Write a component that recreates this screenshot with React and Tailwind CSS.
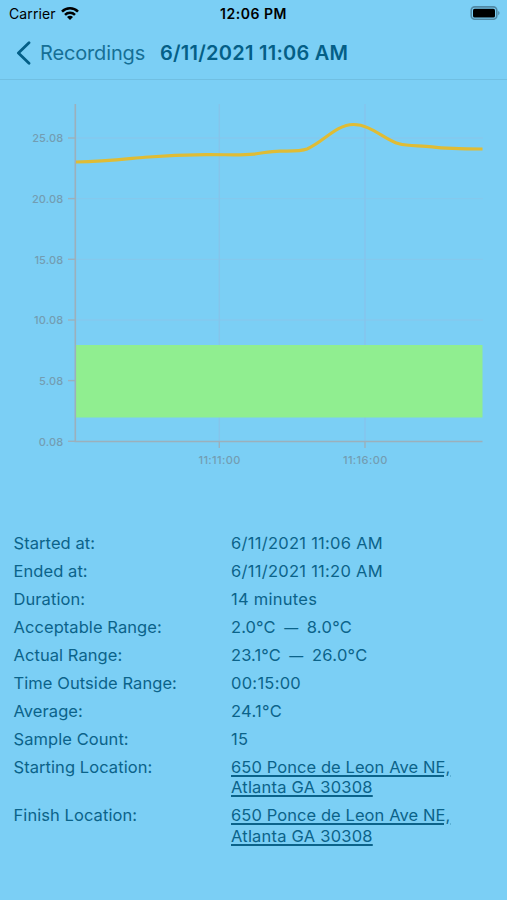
import React from 'react';

const yTicks = [
  { label: '25.08', y: 138 },
  { label: '20.08', y: 198.6 },
  { label: '15.08', y: 259.3 },
  { label: '10.08', y: 320 },
  { label: '5.08', y: 380.6 },
  { label: '0.08', y: 441.3 },
];

const xTicks = [
  { label: '11:11:00', x: 219.3 },
  { label: '11:16:00', x: 365 },
];

const rows = [
  { label: 'Started at:', value: '6/11/2021 11:06 AM' },
  { label: 'Ended at:', value: '6/11/2021 11:20 AM' },
  { label: 'Duration:', value: '14 minutes' },
  { label: 'Acceptable Range:', range: ['2.0°C', '8.0°C'] },
  { label: 'Actual Range:', range: ['23.1°C', '26.0°C'] },
  { label: 'Time Outside Range:', value: '00:15:00' },
  { label: 'Average:', value: '24.1°C' },
  { label: 'Sample Count:', value: '15' },
  { label: 'Starting Location:', address: ['650 Ponce de Leon Ave NE,', 'Atlanta GA 30308'] },
  { label: 'Finish Location:', address: ['650 Ponce de Leon Ave NE,', 'Atlanta GA 30308'] },
];

function StatusBar() {
  return (
    <div className="grid h-[27px] grid-cols-3 items-center px-[7px] text-black">
      <div className="flex items-center gap-[5px] pl-[2px]">
        <span className="text-[14px] tracking-[0.1px]">Carrier</span>
        <svg width="18" height="14" viewBox="0 0 18 14" fill="none" stroke="#000" strokeWidth="2.5">
          <path d="M1 4.7C5.4 0.2 12.6 0.2 17 4.7" />
          <path d="M4 7.8C6.8 5 11.2 5 14 7.8" />
          <path d="M9 12.9L6 9.9C7.7 8.4 10.3 8.4 12 9.9Z" fill="#000" stroke="none" />
        </svg>
      </div>
      <span className="text-center text-[14px] font-semibold tracking-[0.5px] whitespace-nowrap">12:06 PM</span>
      <svg className="justify-self-end" width="30" height="15" viewBox="0 0 30 15">
        <rect x="1.2" y="0.9" width="25.6" height="12.4" rx="3.5" fill="none" stroke="#5089a5" strokeWidth="1.6" />
        <rect x="3" y="2.7" width="22" height="8.8" rx="1.6" fill="#000" />
        <path d="M28.2 5C30 5.7 30 8.5 28.2 9.2Z" fill="#5089a5" />
      </svg>
    </div>
  );
}

function Header() {
  return (
    <div className="flex h-[53px] items-center border-b border-[#70bfe2] pb-px pl-4 text-[#045f87]">
      <svg width="16" height="24" viewBox="0 0 16 24" fill="none" stroke="currentColor" strokeWidth="2.8" strokeLinecap="round" strokeLinejoin="round">
        <path d="M13 1.8L2.4 12L13 22.2" />
      </svg>
      <span className="ml-[8px] w-[120px] text-[20px] tracking-[-0.15px] text-[#166f96]">Recordings</span>
      <span className="text-[20px] font-semibold tracking-[0.25px] whitespace-nowrap">6/11/2021 11:06 AM</span>
    </div>
  );
}

function Chart() {
  return (
    <svg className="block" width="507" height="400" viewBox="0 80 507 400">
      {yTicks.slice(0, 4).map((t) => (
        <path key={t.label} d={`M76 ${t.y}H483`} stroke="#84c9ee" strokeWidth="1.3" />
      ))}
      {xTicks.map((t) => (
        <path key={t.label} d={`M${t.x} 104V441`} stroke="#84c5ec" strokeWidth="1.5" />
      ))}
      <rect x="76" y="345" width="406.5" height="72.5" fill="#90ee90" />
      <path d="M75.3 104V441.5H482.5" fill="none" stroke="#9bb0bc" strokeWidth="1.6" />
      {yTicks.map((t) => (
        <g key={t.label}>
          <path d={`M68 ${t.y}H75`} stroke="#9bb0bc" strokeWidth="1.4" />
          <text x="63.3" y={t.y + 4.3} textAnchor="end" fontSize="11" fontWeight="500" letterSpacing="0.15" fill="#739db2">{t.label}</text>
        </g>
      ))}
      {xTicks.map((t) => (
        <g key={t.label}>
          <path d={`M${t.x} 441V448`} stroke="#9bb0bc" strokeWidth="1.4" />
          <text x={t.x + 0.3} y="464.3" textAnchor="middle" fontSize="11" fontWeight="500" letterSpacing="0.4" fill="#739db2">{t.label}</text>
        </g>
      ))}
      <path
        d="M76 162C105 161.5 122 159.3 145 157.2C170 155 190 154.5 210 154.6C230 154.7 240 155.6 254 154.1C264 152.9 270 151.2 280 151.1C292 151 300 151.6 307 149C323 142.5 336 124.5 353.5 124.5C371 124.5 384 139.5 399 143.8C408 146.4 420 145.4 432 146.9C447 148.9 460 149 482.5 149"
        fill="none"
        stroke="#dfbc35"
        strokeWidth="3.1"
      />
    </svg>
  );
}

function RowValue({ row }) {
  if (row.range) {
    return (
      <span className="flex items-baseline tracking-[0.1px]">
        <span>{row.range[0]}</span>
        <span className="w-[31px] text-center text-[14px] leading-[14px]">—</span>
        <span className="tracking-[0.3px]">{row.range[1]}</span>
      </span>
    );
  }
  if (row.address) {
    return (
      <a href="#" className="flex flex-col underline decoration-[1.5px] underline-offset-[2px]">
        <span className="tracking-[0.08px]">{row.address[0]}</span>
        <span className="tracking-[0.22px]">{row.address[1]}</span>
      </a>
    );
  }
  return <span className="tracking-[0.27px]">{row.value}</span>;
}

function Details() {
  return (
    <div className="flex flex-col gap-[7.8px] pt-[52.6px] pl-[13.5px] text-[16.5px] leading-[20.25px] text-[#0b638a]">
      {rows.map((row) => (
        <div key={row.label} className="flex">
          <span className="w-[217.5px] tracking-[0.07px]">{row.label}</span>
          <RowValue row={row} />
        </div>
      ))}
    </div>
  );
}

export default function App() {
  return (
    <div className="h-[900px] w-[507px] overflow-hidden bg-[#7bcff5] font-['Inter',sans-serif]">
      <StatusBar />
      <Header />
      <Chart />
      <Details />
    </div>
  );
}
